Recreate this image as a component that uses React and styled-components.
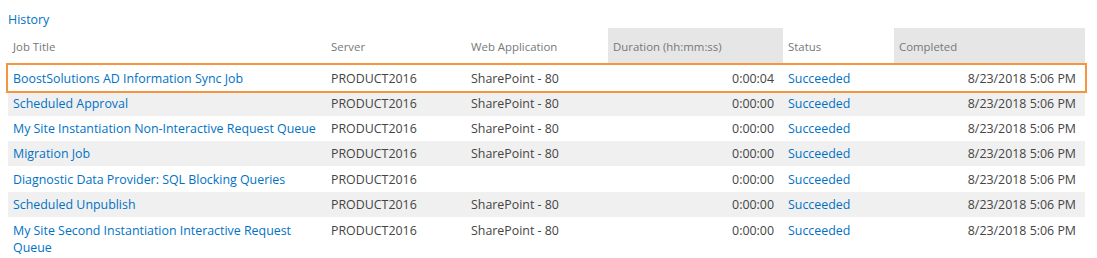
import styled, { createGlobalStyle } from "styled-components";

const FONT = `"Open Sans", "Liberation Sans", sans-serif`;

const GlobalStyle = createGlobalStyle`
  html, body {
    margin: 0;
    padding: 0;
    background: #fff;
  }
  body {
    font-family: ${FONT};
  }
`;

const Page = styled.div`
  padding: 11px 12px 0 8px;
`;

const Title = styled.a`
  display: block;
  color: #0072c6;
  font-size: 12.4px;
  line-height: 18px;
  height: 17px;
  text-decoration: none;
`;

const Grid = styled.div`
  width: 1077px;
`;

const COLS = "318px 140px 142px 175px 111px 191px";

const HeadRow = styled.div`
  display: grid;
  grid-template-columns: ${COLS};
  height: 37px;
`;

const HeadCell = styled.div`
  display: flex;
  align-items: center;
  padding: 0 5px;
  font-size: 11.4px;
  color: #777;
  background: ${({ $sorted }) => ($sorted ? "#e6e6e6" : "transparent")};
`;

const Row = styled.div`
  display: grid;
  grid-template-columns: ${COLS};
  min-height: ${({ $h }) => $h}px;
  background: ${({ $alt }) => ($alt ? "#f0f0f0" : "#fff")};
  outline: ${({ $selected }) => ($selected ? "2px solid #f5953f" : "none")};
`;

const Cell = styled.div`
  display: flex;
  align-items: center;
  justify-content: ${({ $right }) => ($right ? "flex-end" : "flex-start")};
  padding: ${({ $right }) => ($right ? "0 9px 0 5px" : "0 5px")};
  font-size: 12.4px;
  line-height: 17px;
  color: #444;
`;

const Link = styled.a`
  color: #0072c6;
  text-decoration: none;
`;

const Wrap = styled(Cell)`
  align-items: flex-start;
  padding-top: 5px;
`;

const jobs = [
  { title: "BoostSolutions AD Information Sync Job", web: "SharePoint - 80", dur: "0:00:04", h: 26 },
  { title: "Scheduled Approval", web: "SharePoint - 80", dur: "0:00:00", h: 25 },
  { title: "My Site Instantiation Non-Interactive Request Queue", web: "SharePoint - 80", dur: "0:00:00", h: 25 },
  { title: "Migration Job", web: "SharePoint - 80", dur: "0:00:00", h: 25 },
  { title: "Diagnostic Data Provider: SQL Blocking Queries", web: "", dur: "0:00:00", h: 26 },
  { title: "Scheduled Unpublish", web: "SharePoint - 80", dur: "0:00:00", h: 25 },
  { title: "My Site Second Instantiation Interactive Request Queue", web: "SharePoint - 80", dur: "0:00:00", h: 41, wrap: true },
];

export default function App() {
  return (
    <>
      <GlobalStyle />
      <Page>
        <Title href="#">History</Title>
        <Grid>
          <HeadRow>
            <HeadCell>Job Title</HeadCell>
            <HeadCell>Server</HeadCell>
            <HeadCell>Web Application</HeadCell>
            <HeadCell $sorted>Duration (hh:mm:ss)</HeadCell>
            <HeadCell>Status</HeadCell>
            <HeadCell $sorted>Completed</HeadCell>
          </HeadRow>
          {jobs.map((job, i) => {
            const C = job.wrap ? Wrap : Cell;
            return (
              <Row key={job.title} $h={job.h} $alt={i % 2 === 1} $selected={i === 0}>
                <C>
                  <Link href="#">{job.title}</Link>
                </C>
                <C>PRODUCT2016</C>
                <C>{job.web}</C>
                <C $right>{job.dur}</C>
                <C>
                  <Link href="#">Succeeded</Link>
                </C>
                <C $right>8/23/2018 5:06 PM</C>
              </Row>
            );
          })}
        </Grid>
      </Page>
    </>
  );
}
